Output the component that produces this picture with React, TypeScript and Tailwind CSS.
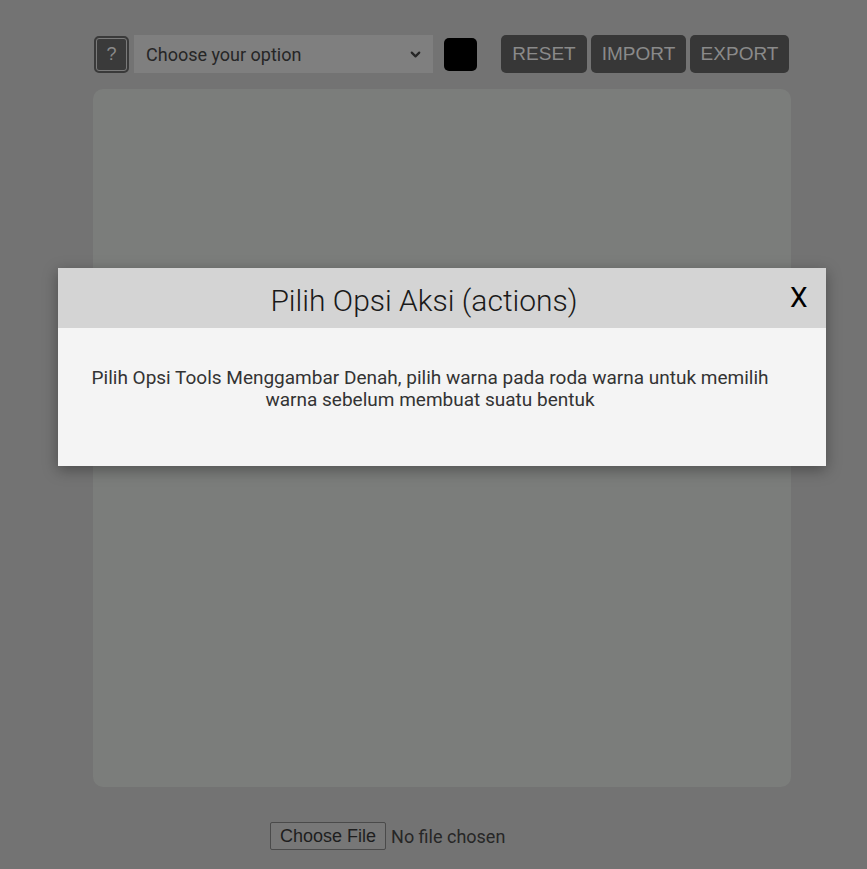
export default function App() {
  return (
    <div className="relative min-h-[869px] w-full bg-[#737373] font-['Roboto',sans-serif]">
      <div className="flex w-[791px] flex-col pl-[93px] pt-[35px]">
        <div className="flex h-[38px] items-center">
          <button className="ml-px flex h-[37px] w-[35px] items-center justify-center rounded-[5px] border-2 border-[#3a3a3a] bg-[#3a3a3a] p-0">
            <span className="flex h-full w-full items-center justify-center rounded-[3px] border border-[#7a7a7a] font-['Liberation_Sans',sans-serif] text-[18px] text-[#8a8a8a]">
              ?
            </span>
          </button>
          <div className="ml-[5px] flex h-[38px] w-[299px] items-center justify-between bg-[#7f7f7f] pl-[12px] pr-[10px] text-[18px] text-[#262626]">
            <span>Choose your option</span>
            <svg width="15" height="15" viewBox="0 0 24 24" fill="none" stroke="#262626" strokeWidth="3.5" strokeLinecap="round" strokeLinejoin="round">
              <path d="M6 9l6 6 6-6" />
            </svg>
          </div>
          <div className="ml-[11px] h-[33px] w-[33px] rounded-[5px] bg-black" />
          <div className="ml-[24px] flex gap-[4px] font-['Liberation_Sans',sans-serif] text-[19px] text-[#8a8a8a]">
            <button className="h-[38px] w-[86px] rounded-[5px] bg-[#373737]">RESET</button>
            <button className="h-[38px] w-[95px] rounded-[5px] bg-[#373737]">IMPORT</button>
            <button className="h-[38px] w-[99px] rounded-[5px] bg-[#373737]">EXPORT</button>
          </div>
        </div>
        <div className="mt-[16px] h-[698px] w-[698px] rounded-[10px] bg-[#7b7d7b]" />
        <div className="mt-[35px] flex items-center pl-[177px] text-[18px] text-[#262626]">
          <span className="flex h-[28px] items-center rounded-[2px] border border-[#4a4a4a] bg-[#777777] px-[9px] font-['Liberation_Sans',sans-serif] text-[18px] text-[#1e1e1e]">
            Choose File
          </span>
          <span className="ml-[5px]">No file chosen</span>
        </div>
      </div>

      <div className="absolute left-[58px] top-[268px] w-[768px] shadow-[0_4px_14px_rgba(0,0,0,0.35)]">
        <div className="flex h-[60px] items-center bg-[#d4d4d4] pt-[5px]">
          <span className="flex-1 text-center text-[30px] font-light text-[#1a1a1a]">Pilih Opsi Aksi (actions)</span>
          <span className="w-[36px] pb-[5px] text-[28px] text-black">X</span>
        </div>
        <div className="h-[138px] bg-[#f4f4f4] pl-[28px] pr-[52px] pt-[39px] text-center text-[19px] leading-[22px] text-[#333333]">
          Pilih Opsi Tools Menggambar Denah, pilih warna pada roda warna untuk memilih warna sebelum membuat suatu bentuk
        </div>
      </div>
    </div>
  )
}
